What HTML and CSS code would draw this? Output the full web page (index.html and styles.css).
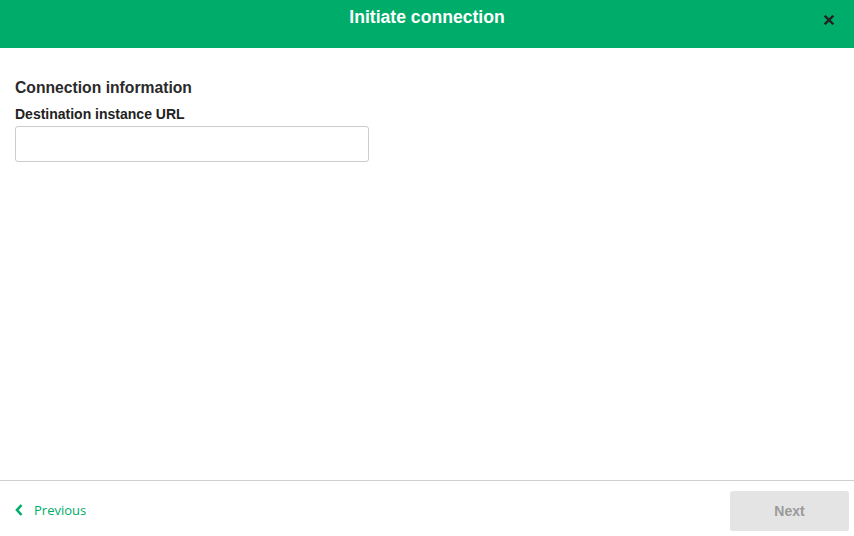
FILE: index.html
```html
<!DOCTYPE html>
<html>
<head>
<meta charset="utf-8">
<link rel="stylesheet" href="styles.css">
</head>
<body>
<div class="dialog">
  <header class="header">
    <h1 class="title">Initiate connection</h1>
    <button class="close" aria-label="Close">
      <svg width="10" height="10" viewBox="0 0 10 10"><path d="M1.5 1.5 L8.5 8.5 M8.5 1.5 L1.5 8.5" stroke="#222" stroke-width="2.4" stroke-linecap="square"/></svg>
    </button>
  </header>
  <main class="body">
    <h2 class="section">Connection information</h2>
    <label class="label" for="url">Destination instance URL</label>
    <input class="input" id="url" type="text">
  </main>
  <footer class="footer">
    <a class="prev" href="#">
      <svg width="8" height="12" viewBox="0 0 8 12"><path d="M6.5 1 L2 6 L6.5 11" fill="none" stroke="#00ac69" stroke-width="2.6"/></svg>
      <span>Previous</span>
    </a>
    <button class="next" disabled>Next</button>
  </footer>
</div>
</body>
</html>
```
FILE: styles.css
```css
* { box-sizing: border-box; }
html, body { margin: 0; padding: 0; }
body {
  width: 854px;
  height: 536px;
  background: #fff;
  font-family: "Liberation Sans", Arial, sans-serif;
  color: #222;
  overflow: hidden;
}
.dialog {
  display: flex;
  flex-direction: column;
  height: 536px;
}
.header {
  position: relative;
  height: 48px;
  background: #00ac69;
  display: flex;
  justify-content: center;
  align-items: flex-start;
}
.title {
  margin: 7px 0 0;
  font-size: 17.6px;
  font-weight: bold;
  color: #fff;
  line-height: 20px;
}
.close {
  position: absolute;
  right: 20px;
  top: 15px;
  background: none;
  border: 0;
  padding: 0;
  width: 10px;
  height: 10px;
  display: flex;
}
.body {
  flex: 1;
  padding: 30px 15px 0;
  display: flex;
  flex-direction: column;
  align-items: flex-start;
}
.section {
  margin: 0;
  font-size: 15.7px;
  font-weight: bold;
  line-height: 20px;
  color: #2a2a2a;
}
.label {
  margin-top: 8px;
  font-size: 14px;
  font-weight: bold;
  line-height: 17px;
  color: #222;
}
.input {
  margin-top: 3px;
  width: 354px;
  height: 36px;
  border: 1px solid #ccc;
  border-radius: 3px;
  font: 14px "Liberation Sans", Arial, sans-serif;
  padding: 0 8px;
}
.footer {
  height: 56px;
  border-top: 1px solid #d0d0d0;
  display: flex;
  align-items: center;
  justify-content: space-between;
  padding: 0 5px 0 15px;
}
.prev {
  display: flex;
  align-items: center;
  gap: 11px;
  color: #00ac69;
  text-decoration: none;
  font-family: "Open Sans", sans-serif;
  font-size: 13px;
  margin-top: 2px;
}
.next {
  width: 119px;
  height: 40px;
  background: #e4e4e4;
  border: 0;
  border-radius: 3px;
  color: #9a9a9a;
  font: bold 14px "Liberation Sans", Arial, sans-serif;
  margin-top: 4px;
}
```
